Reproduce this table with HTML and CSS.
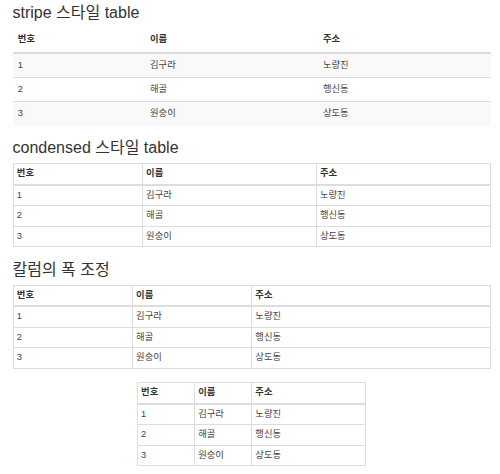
FILE: index.html
```html
<!DOCTYPE html>
<html lang="ko">
<head>
<meta charset="utf-8">
<title>table</title>
<link rel="stylesheet" href="styles.css">
</head>
<body>
<div class="page">
  <h3 class="title first">stripe 스타일 table</h3>
  <table class="table table-striped">
    <thead>
      <tr><th>번호</th><th>이름</th><th>주소</th></tr>
    </thead>
    <tbody>
      <tr><td>1</td><td>김구라</td><td>노량진</td></tr>
      <tr><td>2</td><td>해골</td><td>행신동</td></tr>
      <tr><td>3</td><td>원숭이</td><td>상도동</td></tr>
    </tbody>
  </table>

  <h3 class="title">condensed 스타일 table</h3>
  <table class="table table-bordered table-condensed">
    <thead>
      <tr><th>번호</th><th>이름</th><th>주소</th></tr>
    </thead>
    <tbody>
      <tr><td>1</td><td>김구라</td><td>노량진</td></tr>
      <tr><td>2</td><td>해골</td><td>행신동</td></tr>
      <tr><td>3</td><td>원숭이</td><td>상도동</td></tr>
    </tbody>
  </table>

  <h3 class="title">칼럼의 폭 조정</h3>
  <table class="table table-bordered table-condensed fixed-cols">
    <colgroup><col class="c25"><col class="c25"><col class="c50"></colgroup>
    <thead>
      <tr><th>번호</th><th>이름</th><th>주소</th></tr>
    </thead>
    <tbody>
      <tr><td>1</td><td>김구라</td><td>노량진</td></tr>
      <tr><td>2</td><td>해골</td><td>행신동</td></tr>
      <tr><td>3</td><td>원숭이</td><td>상도동</td></tr>
    </tbody>
  </table>

  <table class="table table-bordered table-condensed fixed-cols narrow">
    <colgroup><col class="c25"><col class="c25"><col class="c50"></colgroup>
    <thead>
      <tr><th>번호</th><th>이름</th><th>주소</th></tr>
    </thead>
    <tbody>
      <tr><td>1</td><td>김구라</td><td>노량진</td></tr>
      <tr><td>2</td><td>해골</td><td>행신동</td></tr>
      <tr><td>3</td><td>원숭이</td><td>상도동</td></tr>
    </tbody>
  </table>
</div>
</body>
</html>
```

FILE: styles.css
```css
html, body {
  margin: 0;
  padding: 0;
  background: #fff;
}

body {
  font-family: "Liberation Sans", Arial, "Noto Sans CJK KR", sans-serif;
  font-size: 9.33px;
  line-height: 13.33px;
  color: #333;
}

.page {
  padding-left: 12.5px;
  width: 478px;
}

.title {
  font-size: 16px;
  font-weight: 400;
  line-height: 1.1;
  margin: 13.33px 0 6.67px;
  color: #333;
}

.title.first {
  margin-top: 4px;
}

.table {
  width: 100%;
  border-collapse: collapse;
  border-spacing: 0;
  margin-bottom: 13.33px;
}

.table th,
.table td {
  text-align: left;
  vertical-align: top;
  padding: 5px 5.33px;
  border-top: 1px solid #ddd;
}

.table td {
  color: #444;
}

.table th {
  font-weight: bold;
  vertical-align: bottom;
  border-bottom: 2px solid #ddd;
}

.table thead tr:first-child th {
  border-top: 0;
}

.table-striped tbody tr:nth-child(odd) {
  background: #f9f9f9;
}

.table-bordered {
  border: 1px solid #ddd;
}

.table-bordered th,
.table-bordered td {
  border: 1px solid #ddd;
}

.table-bordered th {
  border-bottom-width: 2px;
}

.table-condensed th,
.table-condensed td {
  padding: 3.1px 3.33px;
}

.c25 { width: 25%; }
.c50 { width: 50%; }

.narrow {
  width: 229.5px;
  margin-left: auto;
  margin-right: auto;
}
```
